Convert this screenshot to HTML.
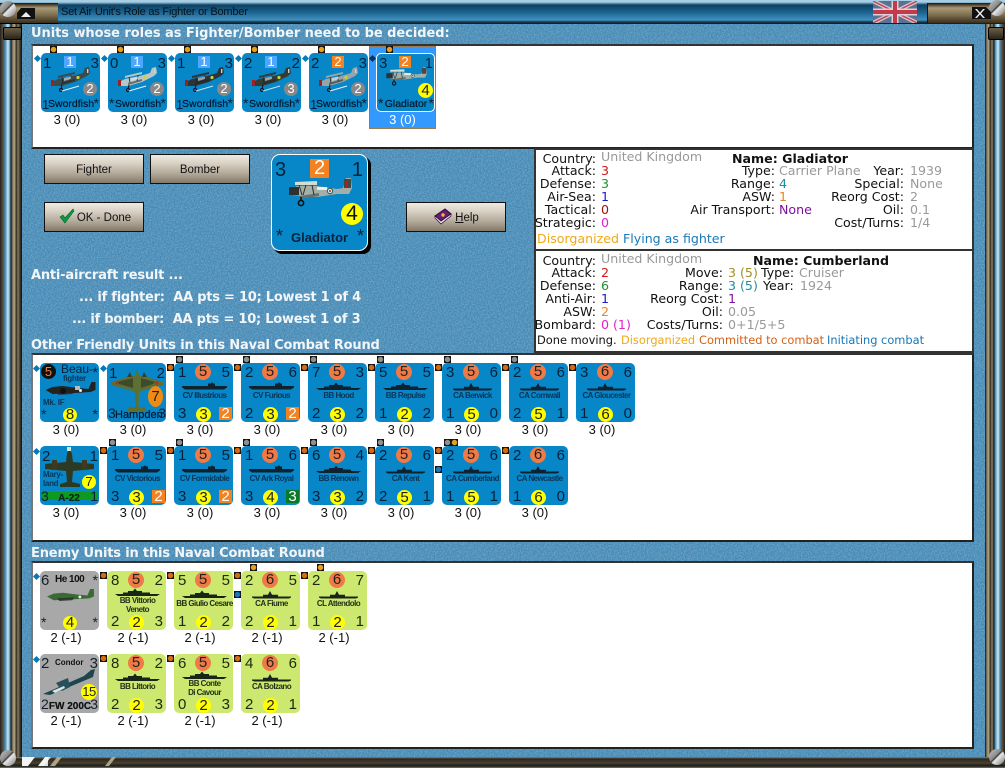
<!DOCTYPE html>
<html><head><meta charset="utf-8"><title>Set Air Unit's Role as Fighter or Bomber</title>
<style>
html,body{margin:0;padding:0;background:#000}
#p{position:relative;width:1005px;height:768px;overflow:hidden;background:#4489b5;font-family:"Liberation Sans",sans-serif}
#p>*{position:absolute}
.pn{background:#fff;border:2px solid #222;box-sizing:border-box;border-left-color:#777;border-top-color:#333}
.h{font:bold 13px "DejaVu Sans",sans-serif;color:#f2f6f8;white-space:nowrap;line-height:16px}
.b{box-sizing:border-box;width:100px;height:30px;border:1px solid #111;background:linear-gradient(#efe9e0,#d8d0c4 30%,#b4aa9b 65%,#857a6a);text-align:center;font:11.5px/30px "Liberation Sans",sans-serif;color:#111}
.t{position:absolute;font:12.6px/14px "DejaVu Sans",sans-serif;white-space:nowrap;color:#111}
.t.f{font-size:11.4px}
.gy{color:#999}.rd{color:#d01818}.gn{color:#209030}.bl2{color:#1818c8}.dr{color:#a01010}.mg{color:#e020d0}.tl2{color:#209098}.or{color:#f08020}.pu{color:#8010a0}.yl{color:#f0a818}.bu{color:#1878b8}.ol{color:#a09020}.br2{color:#d86010}
.c{position:absolute;width:59px;height:59px;border-radius:5px;background:#0786c8;font:15px/17px "Liberation Sans",sans-serif;color:#06223a}
.c.e{background:#cde86e;color:#1c2a10}
.c.g{background:#a8a8a8;color:#15202a}
.c>*{position:absolute}
.tl{left:4px;top:1px}.tr{right:3px;top:1px}.bl{left:4px;top:42px}.br{right:3px;top:42px}
.mc{left:21px;top:1px;width:16px;height:16px;border-radius:50%;background:#ef7a45;text-align:center;line-height:16px;color:#222}
.y{left:22px;top:44px;width:15px;height:15px;border-radius:50%;background:#ff0;text-align:center;line-height:15px;color:#222}
.sq{left:45px;top:44px;width:13px;height:13px;background:#f58220;color:#fff;text-align:center;line-height:13px}
.sh{left:8px;top:19px;width:45px;height:9px;color:#0e2230}
.e .sh{color:#18261a}
.nm{left:-2px;width:65px;top:28px;text-align:center;font:bold 8px/9px "Liberation Sans",sans-serif;letter-spacing:-.55px;color:#0a3556;white-space:nowrap}
.nm.two{top:25px}
.e .nm{color:#23301a}
.l{left:-3.5px;top:59px;width:59px;text-align:center;font:13px/16px "Liberation Sans",sans-serif;color:#111}
.k{width:7px;height:7px;background:#111}
.kg{background:radial-gradient(circle,#909090 0 2.4px,#111 3px)}
.ko{background:radial-gradient(circle,#d86a10 0 2.4px,#111 3px)}
.ky{background:radial-gradient(circle,#e8a018 0 2.4px,#111 3px)}
.kb{background:radial-gradient(circle,#1878b8 0 2.4px,#111 3px)}
.d{left:-6px;top:3px;width:5px;height:5px;background:#0878b8;transform:rotate(45deg)}
.tk{left:-7px;top:1px}.tt{left:2px;top:-7px}.tb{left:-7px;top:20px}.ty{left:9px;top:-7px}
.a{left:2px;top:2px;font-size:15px;font-weight:400}.a2{right:1px;top:2px;font-size:15px;font-weight:400}
.sq2{left:23px;top:3px;width:12px;height:12px;background:#4da6ff;color:#fff;text-align:center;font-size:13px;line-height:12px;font-weight:400}
.sq2.o{background:#f58220}
.ci{left:42px;top:29px;width:14px;height:14px;border-radius:50%;background:#888;color:#fff;text-align:center;font-size:13px;line-height:14px;font-weight:400}
.sw{left:7px;width:46px;top:45px;font:10.5px/12px "Liberation Sans",sans-serif;text-align:center;color:#001a30;white-space:nowrap;text-shadow:0 0 .4px #001a30}
.st{top:44px;left:1px;font-size:14px;line-height:12px}
.sr{top:44px;right:1px;font-size:14px;line-height:12px}
.dg{top:45px;font-size:13px;line-height:13px}
.pl{left:10px;top:14px;width:40px;height:25px;color:#3c4a4c}
.sc{border-radius:50%;background:linear-gradient(135deg,#c4c4c4,#8a8a8a 42%,#333 47%,#e8e8e8 54%,#777)}
</style></head><body>
<div id="p">
<svg width="0" height="0" style="position:absolute">
<defs>
<symbol id="plane" viewBox="0 0 40 25">
<path d="M1 15 L7 12 L22 9 L32 6 L34 1 L38 0 L39 6 L36 9 L24 15 L10 19 L3 19Z" fill="currentColor"/>
<path d="M7 9 L24 5 L24 7 L7 11Z" fill="currentColor"/>
<path d="M10 16 L24 12 L24 14 L10 18Z" fill="#222" opacity=".55"/>
<path d="M11 10 l1 6 M20 8 l-1 6" stroke="#223" stroke-width=".8"/>
<path d="M0 13 h3 v6 h-3z" fill="#a02020"/>
<path d="M11 18 l-1 4" stroke="#111"/>
<circle cx="10" cy="23" r="1.5" fill="none" stroke="#111"/>
<circle cx="27" cy="10.5" r="1.6" fill="#c8d040"/>
<rect x="36" y="2" width="1.4" height="4" fill="#d0d0d0"/>
<path d="M13 11 L20 9.5 V12 L13 14Z" fill="#e4eaea" opacity=".6"/>
</symbol>
<symbol id="glad" viewBox="0 0 65 31">
<path d="M4 13 L10 10 L30 10 L50 13 L56 12 L59 2 L64 2 L65 12 L62 18 L50 18 L30 21 L14 20 L6 19Z" fill="#a2b0a8"/>
<path d="M2 11 h10 v8 h-10z" fill="#2c3230"/>
<path d="M8 6 L30 5 L30 9 L8 9Z" fill="#d4dcd6"/>
<path d="M13 20 L32 17 L32 20 L13 23Z" fill="#67736c"/>
<path d="M12 9 L15 19 M19 9 L16 19 M25 9 L27 19" stroke="#2a2f2c"/>
<path d="M30 11 h10 v3 h-10z" fill="#e8eeea"/>
<path d="M14 21 L14 25" stroke="#111" stroke-width="1.6"/>
<circle cx="14" cy="27" r="2.6" fill="none" stroke="#111" stroke-width="1.6"/>
<circle cx="43" cy="15" r="3.2" fill="#2a6a70"/><circle cx="43" cy="15" r="2" fill="#eee"/><circle cx="43" cy="15" r="1" fill="#b02020"/>
<path d="M57 3 h7 v9 h-7z" fill="#3d4a48"/><path d="M59 5 h2 v6 h-2z" fill="#c01818"/>
</symbol>
<symbol id="mono" viewBox="0 0 52 16">
<path d="M1 9 L8 6 L18 5 L34 7 L44 8 L47 1 L51 1 L51 9 L46 11 L30 12 L8 13Z" fill="currentColor"/>
<path d="M12 11 L30 10 L28 13 L14 14Z" fill="#222" opacity=".7"/>
<circle cx="36" cy="9.5" r="1.5" fill="#eee"/>
</symbol>
<symbol id="cv" viewBox="0 0 45 9"><path d="M0 4H45V5.5L42 7.5H3L0 5.5Z M26 4V1.5H29L30 0L31 1.5H33V4Z" fill="currentColor"/></symbol>
<symbol id="bb" viewBox="0 0 45 9"><path d="M0 6H45L42 8H3Z M8 6V4.5H13V3H18L20 .5L22 3H27V4.5H35V6Z" fill="currentColor"/></symbol>
<symbol id="ca" viewBox="0 0 45 9"><path d="M3 6.5H42V7.5L40 8.5H5L3 7.5Z M14 6.5V4.8H19L21 1L23 4.8H29V6.5Z" fill="currentColor"/></symbol>
</defs>
</svg>

<svg style="left:0;top:0" width="1005" height="768"><filter id="nz"><feTurbulence type="fractalNoise" baseFrequency=".7" numOctaves="2" seed="3"/><feColorMatrix values="0 0 0 0 .95 0 0 0 0 .98 0 0 0 0 1 .9 0 0 0 -.28"/></filter><rect width="1005" height="768" filter="url(#nz)" opacity=".55"/></svg>

<div style="left:0;top:0;width:1005px;height:24px;background:linear-gradient(#a6cfe6 0,#a6cfe6 2px,#0d3f60 5px,#1b628e 12px,#3f90c0 20px,#17394e 22px,#0a1a26 24px)"></div>
<div style="left:0;top:3px;width:58px;height:20px;background:linear-gradient(#1c1608,#a99a78 25%,#7d6e4f 60%,#3a2f1c);border-bottom:1px solid #000"></div>
<div style="left:927px;top:3px;width:78px;height:20px;background:linear-gradient(#1c1608,#a99a78 25%,#7d6e4f 60%,#3a2f1c);border-left:1px solid #111;box-sizing:border-box"></div>
<div style="left:0;top:24px;width:22px;height:735px;background:linear-gradient(90deg,#222 0,#5c513b 3px,#3b86b2 5px,#cfe8f6 8px,#4a8db6 10px,#1c1c14 11px,#978a6e 13px,#b0a484 15px,#2a2418 16px,#857a60 18px,#3e3626 20px,#111 22px)"></div>
<div style="left:985px;top:24px;width:20px;height:735px;background:linear-gradient(90deg,#111 0,#8c8064 2px,#b0a484 4px,#2a2418 5px,#8b8066 7px,#1c1c14 9px,#3b86b2 10px,#d4ecf8 13px,#4a8db6 15px,#5c513b 17px,#222 20px)"></div>
<div style="left:3px;top:27px;width:17px;height:11px;border-radius:2px;background:linear-gradient(#6a5f48,#2a2418);border:1px solid #000"></div>
<div style="left:988px;top:27px;width:14px;height:11px;border-radius:2px;background:linear-gradient(#6a5f48,#2a2418);border:1px solid #000"></div>
<div style="left:0;top:757px;width:1005px;height:11px;background:linear-gradient(#8f8468 0,#2a2620 2px,#4a4030 6px,#1a1a12 9px,#777 11px)"></div>
<svg style="left:22px;top:757px" width="100" height="10"><path d="M0 0H13L6 9H0Z M16 9L23 0H26V9Z" fill="#f4f4f4"/><path d="M26 0H29L22 9H26Z" fill="#ddd"/><path d="M28 9L35 0H40L33 9Z M83 9L90 0H94L87 9Z" fill="#b0a484"/></svg>
<div class="sc" style="left:0;top:1px;width:16px;height:16px"></div>
<div class="sc" style="left:0;top:750px;width:16px;height:16px"></div>
<div class="sc" style="left:989px;top:0;width:16px;height:16px"></div>
<div class="sc" style="left:989px;top:749px;width:16px;height:16px"></div>
<svg style="left:17px;top:8px" width="18" height="11"><path d="M4 0H18V11H0V5Z" fill="#111"/><path d="M4 9L9 4L14 9Z" fill="#eee"/></svg>
<svg style="left:972px;top:7px" width="19" height="12"><path d="M0 0H14L19 5V12H0Z" fill="#111"/><path d="M5 2L8 5.5L11 2H13L9 6.5L13 11H11L8 7.5L5 11H3L7 6.5L3 2Z" fill="#eee"/></svg>
<div style="left:61px;top:5px;font:11px/15px 'Liberation Sans',sans-serif;letter-spacing:-.2px;color:#05121c;white-space:nowrap">Set Air Unit's Role as Fighter or Bomber</div>
<svg style="left:873px;top:1px" width="44" height="22" viewBox="0 0 44 22"><rect width="44" height="22" fill="#5c7090"/><path d="M0 0L44 22M44 0L0 22" stroke="#d8c8d0" stroke-width="4"/><path d="M0 0L44 22M44 0L0 22" stroke="#c04a58" stroke-width="1.5"/><path d="M22 0V22M0 11H44" stroke="#e0d0d8" stroke-width="7"/><path d="M22 0V22M0 11H44" stroke="#c23a4c" stroke-width="4"/></svg>

<div class="h" style="left:31px;top:26px;letter-spacing:-.05px">Units whose roles as Fighter/Bomber need to be decided:</div>
<div class="pn" style="left:31px;top:44px;width:943px;height:105px"></div>

<div style="left:369px;top:46px;width:67px;height:83px;background:#3399ff;box-sizing:border-box;border:1px solid #9a7a50"></div>

<div class="c" style="left:41px;top:53px"><i class="d"></i><i class="k ky ty"></i><span class="a">1</span><span class="sq2">1</span><span class="a2">3</span><svg class="pl" style="color:#3c4a4c"><use href="#plane"/><path d="M11 24L28 19" stroke="#eef" stroke-width="1"/></svg><span class="ci">2</span><span class="dg" style="left:1px">1</span><span class="sw">Swordfish</span><span class="sr">*</span><span class="l">3 (0)</span></div>
<div class="c" style="left:108px;top:53px"><i class="d"></i><i class="k ky ty"></i><span class="a">0</span><span class="sq2">1</span><span class="a2">3</span><svg class="pl" style="color:#b9c6c8"><use href="#plane"/><path d="M11 24L28 19" stroke="#eef" stroke-width="1"/></svg><span class="ci">2</span><span class="st">*</span><span class="sw">Swordfish</span><span class="sr">*</span><span class="l">3 (0)</span></div>
<div class="c" style="left:175px;top:53px"><i class="d"></i><i class="k ky ty"></i><span class="a">1</span><span class="sq2">1</span><span class="a2">3</span><svg class="pl" style="color:#2c3436"><use href="#plane"/><path d="M11 24L28 19" stroke="#cde" stroke-width="1"/></svg><span class="ci">2</span><span class="dg" style="left:1px">1</span><span class="sw">Swordfish</span><span class="sr">*</span><span class="l">3 (0)</span></div>
<div class="c" style="left:242px;top:53px"><i class="d"></i><i class="k ky ty"></i><span class="a">2</span><span class="sq2">1</span><span class="a2">2</span><svg class="pl" style="color:#343c34"><use href="#plane"/><path d="M11 24L28 19" stroke="#cde" stroke-width="1"/></svg><span class="ci">3</span><span class="st">*</span><span class="sw">Swordfish</span><span class="sr">*</span><span class="l">3 (0)</span></div>
<div class="c" style="left:309px;top:53px"><i class="d"></i><i class="k ky ty"></i><span class="a">2</span><span class="sq2 o">2</span><span class="a2">3</span><svg class="pl" style="color:#98a4a6"><use href="#plane"/><path d="M11 24L28 19" stroke="#eef" stroke-width="1"/></svg><span class="ci">2</span><span class="dg" style="left:1px">1</span><span class="sw">Swordfish</span><span class="sr">*</span><span class="l">3 (0)</span></div>
<div class="c" style="left:376px;top:53px;box-sizing:border-box;border:1px solid #fff"><i class="d" style="left:-7px;top:2px;background:#06385c"></i><i class="k ky" style="left:9px;top:-8px"></i><span class="a" style="left:2px;top:1px">3</span><span class="sq2 o" style="left:22px;top:2px">2</span><span class="a2" style="right:1px;top:1px">1</span><svg style="left:8px;top:12px;width:42px;height:20px"><use href="#glad"/></svg><span class="y" style="left:41px;top:29px">4</span><span class="st" style="left:1px;top:43px">*</span><span class="sw" style="left:6px;top:44px">Gladiator</span><span class="sr" style="right:0;top:43px">*</span><span class="l" style="color:#fff;top:58px;left:-4px">3 (0)</span></div>

<div class="b" style="left:44px;top:154px">Fighter</div>
<div class="b" style="left:150px;top:154px">Bomber</div>
<div class="b" style="left:44px;top:202px;padding-left:20px">OK - Done</div>
<svg style="left:59px;top:208px" width="16" height="16" viewBox="0 0 16 16"><path d="M1 9L4 7L6 10L14 1L15 3L6 15Z" fill="#0c9a3a" stroke="#063" stroke-width=".6"/></svg>
<div class="b" style="left:406px;top:202px;padding-left:22px"><u>H</u>elp</div>
<svg style="left:434px;top:208px" width="18" height="17" viewBox="0 0 18 17"><path d="M1 8L11 1L17 6L7 13Z" fill="#6a1a78" stroke="#2a0a30"/><path d="M1 8V10L7 16L17 8V6L7 13Z" fill="#e4dce8" stroke="#2a0a30" stroke-width=".7"/><circle cx="9" cy="7" r="1.7" fill="#e8c020"/></svg>

<div style="left:274px;top:157px;width:97px;height:97px;background:#000;border-radius:8px"></div>
<div class="c" style="left:271px;top:154px;width:97px;height:97px;box-sizing:border-box;border:1px solid #fff;border-radius:9px;font-size:19px">
<span style="left:3px;top:4px;font-size:20px;line-height:22px">3</span>
<span style="left:38px;top:4px;width:19px;height:19px;background:#f58220;color:#fff;text-align:center;line-height:19px;font-size:20px">2</span>
<span style="right:4px;top:4px;font-size:20px;line-height:22px">1</span>
<svg style="left:15px;top:21px;width:65px;height:31px"><use href="#glad"/></svg>
<span style="left:69px;top:48px;width:22px;height:22px;border-radius:50%;background:#ff0;text-align:center;font-size:21px;line-height:22px;color:#111">4</span>
<span style="left:4px;top:73px;font-size:18px;line-height:16px">*</span>
<span style="left:19px;width:54px;top:74px;font:bold 13px/17px 'Liberation Sans',sans-serif;text-align:center;color:#07233b;white-space:nowrap">Gladiator</span>
<span style="right:3px;top:73px;font-size:18px;line-height:16px">*</span>
</div>

<div class="h" style="left:31px;top:268px;letter-spacing:-.2px">Anti-aircraft result ...</div>
<div class="h" style="left:79px;top:290px;white-space:pre;letter-spacing:-.24px">... if fighter:  AA pts = 10; Lowest 1 of 4</div>
<div class="h" style="left:72px;top:312px;white-space:pre;letter-spacing:-.24px">... if bomber:  AA pts = 10; Lowest 1 of 3</div>
<div class="h" style="left:31px;top:338px;letter-spacing:-.17px">Other Friendly Units in this Naval Combat Round</div>

<div class="pn" style="left:534px;top:148px;width:440px;height:103px;border-color:#333"></div>
<div class="pn" style="left:534px;top:249px;width:440px;height:104px;border-color:#333"></div>

<span class="t" style="right:409px;top:152px">Country:</span><span class="t gy" style="left:601px;top:150px">United Kingdom</span>
<span class="t" style="right:409px;top:164px">Attack:</span><span class="t rd" style="left:601px;top:164px">3</span>
<span class="t" style="right:409px;top:177px">Defense:</span><span class="t gn" style="left:601px;top:177px">3</span>
<span class="t" style="right:409px;top:190px">Air-Sea:</span><span class="t bl2" style="left:601px;top:190px">1</span>
<span class="t" style="right:409px;top:203px">Tactical:</span><span class="t dr" style="left:601px;top:203px">0</span>
<span class="t" style="right:409px;top:216px">Strategic:</span><span class="t mg" style="left:601px;top:216px">0</span>
<span class="t yl" style="left:537px;top:232px">Disorganized</span><span class="t bu" style="left:623px;top:232px">Flying as fighter</span>
<span class="t" style="left:732px;top:152px;font-weight:bold">Name: Gladiator</span>
<span class="t" style="right:230px;top:164px">Type:</span><span class="t gy" style="left:779px;top:164px">Carrier Plane</span>
<span class="t" style="right:230px;top:177px">Range:</span><span class="t tl2" style="left:779px;top:177px">4</span>
<span class="t" style="right:230px;top:190px">ASW:</span><span class="t or" style="left:779px;top:190px">1</span>
<span class="t" style="right:230px;top:203px">Air Transport:</span><span class="t pu" style="left:779px;top:203px">None</span>
<span class="t" style="right:101px;top:164px">Year:</span><span class="t gy" style="left:910px;top:164px">1939</span>
<span class="t" style="right:101px;top:177px">Special:</span><span class="t gy" style="left:910px;top:177px">None</span>
<span class="t" style="right:101px;top:190px">Reorg Cost:</span><span class="t gy" style="left:910px;top:190px">2</span>
<span class="t" style="right:101px;top:203px">Oil:</span><span class="t gy" style="left:910px;top:203px">0.1</span>
<span class="t" style="right:101px;top:216px">Cost/Turns:</span><span class="t gy" style="left:910px;top:216px">1/4</span>

<span class="t" style="right:409px;top:254px">Country:</span><span class="t gy" style="left:601px;top:252px">United Kingdom</span>
<span class="t" style="right:409px;top:266px">Attack:</span><span class="t rd" style="left:601px;top:266px">2</span>
<span class="t" style="right:409px;top:279px">Defense:</span><span class="t gn" style="left:601px;top:279px">6</span>
<span class="t" style="right:409px;top:292px">Anti-Air:</span><span class="t bl2" style="left:601px;top:292px">1</span>
<span class="t" style="right:409px;top:305px">ASW:</span><span class="t or" style="left:601px;top:305px">2</span>
<span class="t" style="right:409px;top:318px">Bombard:</span><span class="t mg" style="left:601px;top:318px">0 (1)</span>
<span class="t f" style="left:537px;top:333px">Done moving.</span><span class="t f yl" style="left:621px;top:333px">Disorganized</span><span class="t f br2" style="left:699px;top:333px">Committed to combat</span><span class="t f bu" style="left:827px;top:333px">Initiating combat</span>
<span class="t" style="left:753px;top:254px;font-weight:bold">Name: Cumberland</span>
<span class="t" style="right:282px;top:266px">Move:</span><span class="t ol" style="left:728px;top:266px">3 (5)</span>
<span class="t" style="right:282px;top:279px">Range:</span><span class="t tl2" style="left:728px;top:279px">3 (5)</span>
<span class="t" style="right:282px;top:292px">Reorg Cost:</span><span class="t pu" style="left:728px;top:292px">1</span>
<span class="t" style="right:282px;top:305px">Oil:</span><span class="t gy" style="left:728px;top:305px">0.05</span>
<span class="t" style="right:282px;top:318px">Costs/Turns:</span><span class="t gy" style="left:728px;top:318px">0+1/5+5</span>
<span class="t" style="left:761px;top:266px">Type:</span><span class="t gy" style="left:799px;top:266px">Cruiser</span>
<span class="t" style="left:763px;top:279px">Year:</span><span class="t gy" style="left:800px;top:279px">1924</span>

<div class="pn" style="left:31px;top:353px;width:943px;height:189px"></div>

<div class="c" style="left:40px;top:363px"><i class="d"></i><span style="left:1px;top:1px;width:15px;height:15px;border-radius:50%;background:#111;color:#f08030;text-align:center;line-height:15px;font-size:13px">5</span><span style="left:21px;top:0;font-size:12px;line-height:13px">Beau-</span><span style="left:23px;top:11px;font:bold 8px/9px 'Liberation Sans',sans-serif;letter-spacing:-.3px;color:#0a3556">fighter</span><span class="sr" style="top:3px">*</span><svg style="left:3px;top:18px;width:55px;height:16px;color:#26221f"><use href="#mono"/><path d="M32 5h5v4h-5z" fill="#bbb"/><circle cx="20" cy="10" r="3" fill="#111"/></svg><span style="left:3px;top:35px;font:bold 8px/9px 'Liberation Sans',sans-serif;letter-spacing:-.2px;color:#0a3556">Mk. IF</span><span class="st" style="top:45px">*</span><span class="y" style="left:23px;top:45px;width:14px;height:14px;line-height:14px">8</span><span class="sr" style="top:45px">*</span><span class="l">3 (0)</span></div>
<div class="c" style="left:107px;top:363px"><i class="d"></i><span class="a">1</span><span class="a2">2</span><svg style="left:0;top:0;width:59px;height:59px" viewBox="0 0 59 59"><path d="M30 6L32 13L36 13L56 19V22L34 28L32 30L31.5 44L39 45V48H21V45L28.5 44L28 30L26 28L4 22V19L24 13L28 13Z" fill="#5e6f34"/><path d="M20 14L23 9L25 14ZM35 14L37 9L40 14Z" fill="#3a3f2a"/><path d="M10 19L26 15V25L12 21Z M48 19L34 15V25L46 21Z" fill="#3f4a2a"/><circle cx="10" cy="20" r="1.6" fill="#b03030"/><circle cx="50" cy="20" r="1.6" fill="#b03030"/></svg><span style="left:41px;top:23px;width:15px;height:21px;border-radius:50%;background:#f08a10;text-align:center;line-height:21px;color:#222">7</span><span class="dg" style="left:1px;top:44px;font-size:14px">3</span><span class="sw" style="left:8px;top:46px;width:43px;font-size:11px">Hampden</span><span class="dg" style="right:0;top:44px;font-size:14px">3</span><span class="l">3 (0)</span></div>

<div class="c" style="left:174px;top:363px"><i class="k ko tk"></i><i class="k kg tt"></i><span class="tl">1</span><span class="mc">5</span><span class="tr">5</span><svg class="sh"><use href="#cv"/></svg><span class="nm">CV Illustrious</span><span class="bl">3</span><span class="y">3</span><span class="sq">2</span><span class="l">3 (0)</span></div>
<div class="c" style="left:241px;top:363px"><i class="k ko tk"></i><i class="k kg tt"></i><span class="tl">2</span><span class="mc">5</span><span class="tr">6</span><svg class="sh"><use href="#cv"/></svg><span class="nm">CV Furious</span><span class="bl">2</span><span class="y">3</span><span class="sq">2</span><span class="l">3 (0)</span></div>
<div class="c" style="left:308px;top:363px"><i class="k ko tk"></i><i class="k kg tt"></i><span class="tl">7</span><span class="mc">5</span><span class="tr">3</span><svg class="sh"><use href="#bb"/></svg><span class="nm">BB Hood</span><span class="bl">2</span><span class="y">3</span><span class="br">2</span><span class="l">3 (0)</span></div>
<div class="c" style="left:375px;top:363px"><i class="k ko tk"></i><i class="k kg tt"></i><span class="tl">5</span><span class="mc">5</span><span class="tr">5</span><svg class="sh"><use href="#bb"/></svg><span class="nm">BB Repulse</span><span class="bl">1</span><span class="y">2</span><span class="br">2</span><span class="l">3 (0)</span></div>
<div class="c" style="left:442px;top:363px"><i class="k ko tk"></i><i class="k kg tt"></i><span class="tl">3</span><span class="mc">5</span><span class="tr">6</span><svg class="sh"><use href="#ca"/></svg><span class="nm">CA Berwick</span><span class="bl">1</span><span class="y">5</span><span class="br">0</span><span class="l">3 (0)</span></div>
<div class="c" style="left:509px;top:363px"><i class="k ko tk"></i><i class="k kg tt"></i><span class="tl">2</span><span class="mc">5</span><span class="tr">6</span><svg class="sh"><use href="#ca"/></svg><span class="nm">CA Cornwall</span><span class="bl">2</span><span class="y">5</span><span class="br">1</span><span class="l">3 (0)</span></div>
<div class="c" style="left:576px;top:363px"><i class="k ko tk"></i><span class="tl">3</span><span class="mc">6</span><span class="tr">6</span><svg class="sh"><use href="#ca"/></svg><span class="nm">CA Gloucester</span><span class="bl">1</span><span class="y">6</span><span class="br">0</span><span class="l">3 (0)</span></div>

<div class="c" style="left:40px;top:446px"><i class="d"></i><svg style="left:0;top:0;width:59px;height:59px" viewBox="0 0 59 59"><path d="M29 1L32 8L33 16L54 18V23L33 25L32 36L40 38V41H20V38L27 36L26 25L5 23V18L26 16L27 8Z" fill="#2c3a24"/><path d="M12 14h5v10h-5z M42 14h5v10h-5z" fill="#3e3a22"/><path d="M27 1h4v4h-4z" fill="#cfe6d8"/></svg><span class="a">2</span><span class="a2">1</span><span style="left:3px;top:24px;font:bold 8px/9px 'Liberation Sans',sans-serif;letter-spacing:-.3px;color:#0a3556">Mary-<br>land</span><span style="left:42px;top:29px;width:14px;height:14px;border-radius:50%;background:#ff0;text-align:center;line-height:14px;font-size:13px;color:#222">7</span><span style="left:1px;top:46px;width:57px;height:8px;background:#0e9a1e"></span><span class="dg" style="left:1px;top:44px;font-size:14px">3</span><span class="sw" style="left:6px;top:47px;font-weight:bold;font-size:10px;color:#0c2a1a">A-22</span><span class="dg" style="right:1px;top:44px;font-size:14px">1</span><span class="l">3 (0)</span></div>
<div class="c" style="left:107px;top:446px"><i class="k ko tk"></i><i class="k kg tt"></i><span class="tl">1</span><span class="mc">5</span><span class="tr">5</span><svg class="sh"><use href="#cv"/></svg><span class="nm">CV Victorious</span><span class="bl">3</span><span class="y">3</span><span class="sq">2</span><span class="l">3 (0)</span></div>
<div class="c" style="left:174px;top:446px"><i class="k ko tk"></i><i class="k kg tt"></i><span class="tl">1</span><span class="mc">5</span><span class="tr">5</span><svg class="sh"><use href="#cv"/></svg><span class="nm">CV Formidable</span><span class="bl">3</span><span class="y">3</span><span class="sq">2</span><span class="l">3 (0)</span></div>
<div class="c" style="left:241px;top:446px"><i class="k ko tk"></i><i class="k kg tt"></i><span class="tl">1</span><span class="mc">5</span><span class="tr">6</span><svg class="sh"><use href="#cv"/></svg><span class="nm">CV Ark Royal</span><span class="bl">3</span><span class="y">4</span><span class="sq" style="background:#0a7a2a">3</span><span class="l">3 (0)</span></div>
<div class="c" style="left:308px;top:446px"><i class="k ko tk"></i><i class="k kg tt"></i><span class="tl">6</span><span class="mc">5</span><span class="tr">4</span><svg class="sh"><use href="#bb"/></svg><span class="nm">BB Renown</span><span class="bl">3</span><span class="y">3</span><span class="br">2</span><span class="l">3 (0)</span></div>
<div class="c" style="left:375px;top:446px"><i class="k ko tk"></i><i class="k kg tt"></i><span class="tl">2</span><span class="mc">5</span><span class="tr">6</span><svg class="sh"><use href="#ca"/></svg><span class="nm">CA Kent</span><span class="bl">2</span><span class="y">5</span><span class="br">1</span><span class="l">3 (0)</span></div>
<div class="c" style="left:442px;top:446px"><i class="k ko tk"></i><i class="k kb tb"></i><i class="k kg tt"></i><i class="k ky ty"></i><span class="tl">2</span><span class="mc">5</span><span class="tr">6</span><svg class="sh"><use href="#ca"/></svg><span class="nm">CA Cumberland</span><span class="bl">1</span><span class="y">5</span><span class="br">1</span><span class="l">3 (0)</span></div>
<div class="c" style="left:509px;top:446px"><i class="k ko tk"></i><span class="tl">2</span><span class="mc">6</span><span class="tr">6</span><svg class="sh"><use href="#ca"/></svg><span class="nm">CA Newcastle</span><span class="bl">1</span><span class="y">6</span><span class="br">0</span><span class="l">3 (0)</span></div>

<div class="h" style="left:31px;top:546px;letter-spacing:-.17px">Enemy Units in this Naval Combat Round</div>
<div class="pn" style="left:31px;top:561px;width:943px;height:188px"></div>

<div class="c g" style="left:40px;top:571px"><i class="d"></i><span class="tl" style="left:1px">6</span><span style="left:15px;top:3px;font:bold 10px/12px 'Liberation Sans',sans-serif;letter-spacing:-.5px;color:#111">He 100</span><span class="sr" style="top:3px">*</span><svg style="left:5px;top:17px;width:51px;height:15px;color:#3a6a34"><use href="#mono"/></svg><span class="st" style="top:45px">*</span><span class="y" style="left:23px;top:45px;width:14px;height:14px;line-height:14px">4</span><span class="sr" style="top:45px">*</span><span class="l">2 (-1)</span></div>
<div class="c e" style="left:107px;top:571px"><i class="k ko tk"></i><span class="tl">8</span><span class="mc">5</span><span class="tr">2</span><svg class="sh" style="top:17px"><use href="#bb"/></svg><span class="nm two">BB Vittorio<br>Veneto</span><span class="bl">2</span><span class="y">2</span><span class="br">3</span><span class="l">2 (-1)</span></div>
<div class="c e" style="left:174px;top:571px"><i class="k ko tk"></i><span class="tl">5</span><span class="mc">5</span><span class="tr">5</span><svg class="sh"><use href="#bb"/></svg><span class="nm">BB Giulio Cesare</span><span class="bl">1</span><span class="y">2</span><span class="br">2</span><span class="l">2 (-1)</span></div>
<div class="c e" style="left:241px;top:571px"><i class="k ko tk"></i><i class="k kb tb"></i><i class="k ky ty"></i><span class="tl">2</span><span class="mc">6</span><span class="tr">5</span><svg class="sh"><use href="#ca"/></svg><span class="nm">CA Fiume</span><span class="bl">2</span><span class="y">2</span><span class="br">1</span><span class="l">2 (-1)</span></div>
<div class="c e" style="left:308px;top:571px"><i class="k ko tk"></i><i class="k ky ty"></i><span class="tl">2</span><span class="mc">6</span><span class="tr">7</span><svg class="sh"><use href="#ca"/></svg><span class="nm">CL Attendolo</span><span class="bl">1</span><span class="y">2</span><span class="br">1</span><span class="l">2 (-1)</span></div>

<div class="c g" style="left:40px;top:654px"><i class="d"></i><span class="tl" style="left:1px">2</span><span style="left:15px;top:4px;font:bold 8px/10px 'Liberation Sans',sans-serif;color:#111">Condor</span><span class="tr" style="right:1px">3</span><svg style="left:2px;top:12px;width:54px;height:30px" viewBox="0 0 54 30"><path d="M1 28L42 10L49 4L53 3L51 11L8 29Z" fill="#1f4650"/><path d="M14 17L26 12L28 21L20 25Z" fill="#28505c"/><path d="M10 25L22 20L23 22L13 27Z" fill="#d8e4e4"/></svg><span style="left:41px;top:30px;width:16px;height:16px;border-radius:50%;background:#ff0;text-align:center;line-height:16px;font-size:13px;letter-spacing:-.5px;color:#222">15</span><span class="dg" style="left:1px;top:44px;font-size:14px">2</span><span class="sw" style="left:7px;top:47px;font-weight:bold;font-size:10px;color:#111">FW 200C</span><span class="dg" style="right:1px;top:44px;font-size:14px">3</span><span class="l">2 (-1)</span></div>
<div class="c e" style="left:107px;top:654px"><i class="k ko tk"></i><span class="tl">8</span><span class="mc">5</span><span class="tr">2</span><svg class="sh"><use href="#bb"/></svg><span class="nm">BB Littorio</span><span class="bl">2</span><span class="y">2</span><span class="br">3</span><span class="l">2 (-1)</span></div>
<div class="c e" style="left:174px;top:654px"><i class="k ko tk"></i><span class="tl">6</span><span class="mc">5</span><span class="tr">5</span><svg class="sh" style="top:17px"><use href="#bb"/></svg><span class="nm two">BB Conte<br>Di Cavour</span><span class="bl">0</span><span class="y">2</span><span class="br">3</span><span class="l">2 (-1)</span></div>
<div class="c e" style="left:241px;top:654px"><i class="k ko tk"></i><span class="tl">4</span><span class="mc">6</span><span class="tr">6</span><svg class="sh"><use href="#ca"/></svg><span class="nm">CA Bolzano</span><span class="bl">2</span><span class="y">2</span><span class="br">1</span><span class="l">2 (-1)</span></div>
</div>
</body></html>
